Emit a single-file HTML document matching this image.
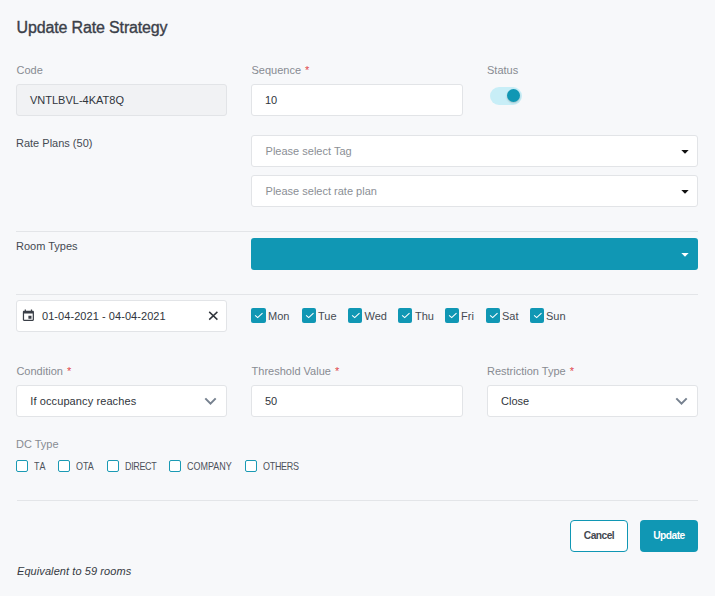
<!DOCTYPE html>
<html>
<head>
<meta charset="utf-8">
<style>
*{box-sizing:border-box;margin:0;padding:0}
html,body{width:715px;height:596px;overflow:hidden;background:#f7f8fa;font-family:"Liberation Sans",sans-serif;}
.a{position:absolute;white-space:nowrap}
.title{left:16.6px;top:20px;font-size:16px;line-height:16px;letter-spacing:-0.15px;-webkit-text-stroke:0.35px #3b4049;color:#3b4049}
.t{font-size:11px;line-height:11px}
.lbl{color:#878b92}
.lbl2{color:#454a52}
.req{color:#e0474c;margin-left:1px}
.box{background:#fff;border:1px solid #e2e4e7;border-radius:3px;height:32px}
.val{color:#30353c}
.ph{color:#8b8f95}
.caret{width:0;height:0;border-left:3.75px solid transparent;border-right:3.75px solid transparent;border-top:3.75px solid #111}
.line{height:1px;background:#e3e5e8}
.cb{width:15px;height:15px;border-radius:2px;background:#1097b4}
.cb svg{position:absolute;left:0;top:0}
.cbo{width:12px;height:12px;border:1.5px solid #1a9ab4;border-radius:2px;background:#fff}
.day{color:#454a52}
.dc{font-size:9px;line-height:9px;color:#4d525a;transform:scaleY(1.15);transform-origin:0 7px}
</style>
</head>
<body>
<div class="a title">Update Rate Strategy</div>

<div class="a t lbl" style="left:16.5px;top:65px">Code</div>
<div class="a t lbl" style="left:251.5px;top:65px">Sequence <span class="req">*</span></div>
<div class="a t lbl" style="left:487px;top:65px">Status</div>

<div class="a box" style="left:16px;top:84px;width:211px;background:#f1f2f4"></div>
<div class="a t val" style="left:30px;top:95px">VNTLBVL-4KAT8Q</div>
<div class="a box" style="left:251px;top:84px;width:212px"></div>
<div class="a t val" style="left:265px;top:95px">10</div>

<!-- toggle -->
<div class="a" style="left:490px;top:87px;width:32px;height:18px;border-radius:9px;background:#c8eef7"></div>
<div class="a" style="left:507px;top:89px;width:13px;height:13px;border-radius:50%;background:#1097b4;box-shadow:0 1px 2px rgba(0,0,0,.2)"></div>

<div class="a t lbl2" style="left:16px;top:138px">Rate Plans (50)</div>
<div class="a box" style="left:251px;top:135px;width:447px"></div>
<div class="a t ph" style="left:265.6px;top:146px">Please select Tag</div>
<svg class="a" style="left:681.1px;top:150px" width="9" height="5"><path d="M0.3 0H7.7L4 3.7Z" fill="#111"/></svg>
<div class="a box" style="left:251px;top:175px;width:447px"></div>
<div class="a t ph" style="left:265.6px;top:186px">Please select rate plan</div>
<svg class="a" style="left:681.1px;top:190px" width="9" height="5"><path d="M0.3 0H7.7L4 3.7Z" fill="#111"/></svg>

<div class="a line" style="left:16px;top:231px;width:682px"></div>
<div class="a t lbl2" style="left:16px;top:241px">Room Types</div>
<div class="a" style="left:251px;top:238px;width:447px;height:32px;border-radius:3px;background:#1097b4"></div>
<svg class="a" style="left:681.1px;top:252.7px" width="9" height="5"><path d="M0.3 0H7.7L4 3.7Z" fill="#fff"/></svg>
<div class="a line" style="left:16px;top:294px;width:682px"></div>

<!-- date -->
<div class="a box" style="left:16px;top:300px;width:211px"></div>
<svg class="a" style="left:20.8px;top:308.8px" width="14.8" height="13.7" viewBox="0 0 24 24" preserveAspectRatio="none"><path fill="#3a3f47" d="M17 12h-5v5h5v-5zM16 1v2H8V1H6v2H5c-1.11 0-1.99.9-1.99 2L3 19c0 1.1.89 2 2 2h14c1.1 0 2-.9 2-2V5c0-1.1-.9-2-2-2h-1V1h-2zm3 18H5V8h14v11z"/></svg>
<div class="a t val" style="left:42px;top:311px;letter-spacing:0.06px">01-04-2021 - 04-04-2021</div>
<svg class="a" style="left:205px;top:308px" width="16" height="15"><path d="M4.2 3.9L12.4 11.6M12.4 3.9L4.2 11.6" fill="none" stroke="#30353c" stroke-width="1.45"/></svg>

<!-- days -->
<div class="a cb" style="left:251px;top:308px"><svg width="15" height="15"><path d="M4.1 7.4l2.6 2.2 4.8-4.5" fill="none" stroke="#fff" stroke-width="1.1"/></svg></div><div class="a t day" style="left:268px;top:311px">Mon</div>
<div class="a cb" style="left:302px;top:308px;width:14px"><svg width="15" height="15"><path d="M4.1 7.4l2.6 2.2 4.8-4.5" fill="none" stroke="#fff" stroke-width="1.1"/></svg></div><div class="a t day" style="left:318px;top:311px">Tue</div>
<div class="a cb" style="left:348px;top:308px;width:14px"><svg width="15" height="15"><path d="M4.1 7.4l2.6 2.2 4.8-4.5" fill="none" stroke="#fff" stroke-width="1.1"/></svg></div><div class="a t day" style="left:364.5px;top:311px">Wed</div>
<div class="a cb" style="left:398px;top:308px;width:14px"><svg width="15" height="15"><path d="M4.1 7.4l2.6 2.2 4.8-4.5" fill="none" stroke="#fff" stroke-width="1.1"/></svg></div><div class="a t day" style="left:415px;top:311px">Thu</div>
<div class="a cb" style="left:445px;top:308px;width:14px"><svg width="15" height="15"><path d="M4.1 7.4l2.6 2.2 4.8-4.5" fill="none" stroke="#fff" stroke-width="1.1"/></svg></div><div class="a t day" style="left:461px;top:311px">Fri</div>
<div class="a cb" style="left:486px;top:308px;width:14px"><svg width="15" height="15"><path d="M4.1 7.4l2.6 2.2 4.8-4.5" fill="none" stroke="#fff" stroke-width="1.1"/></svg></div><div class="a t day" style="left:502px;top:311px">Sat</div>
<div class="a cb" style="left:530px;top:308px;width:14px"><svg width="15" height="15"><path d="M4.1 7.4l2.6 2.2 4.8-4.5" fill="none" stroke="#fff" stroke-width="1.1"/></svg></div><div class="a t day" style="left:546px;top:311px">Sun</div>

<div class="a t lbl" style="left:16.4px;top:366px">Condition <span class="req">*</span></div>
<div class="a t lbl" style="left:251.6px;top:366px">Threshold Value <span class="req">*</span></div>
<div class="a t lbl" style="left:487px;top:366px">Restriction Type <span class="req">*</span></div>

<div class="a box" style="left:16px;top:385px;width:211px"></div>
<div class="a t val" style="left:30.3px;top:396px;letter-spacing:0.1px">If occupancy reaches</div>
<svg class="a" style="left:200px;top:390px" width="22" height="22"><path d="M5.3 8.4l5.2 5.2 5.2-5.2" fill="none" stroke="#76818f" stroke-width="2"/></svg>
<div class="a box" style="left:251px;top:385px;width:212px"></div>
<div class="a t val" style="left:265px;top:396px">50</div>
<div class="a box" style="left:487px;top:385px;width:211px"></div>
<div class="a t val" style="left:501px;top:396px">Close</div>
<svg class="a" style="left:671px;top:390px" width="22" height="22"><path d="M5.3 8.4l5.2 5.2 5.2-5.2" fill="none" stroke="#76818f" stroke-width="2"/></svg>

<div class="a t lbl" style="left:16px;top:439px">DC Type</div>
<div class="a cbo" style="left:16px;top:460px"></div><div class="a dc" style="left:34px;top:463px;letter-spacing:0.6px">TA</div>
<div class="a cbo" style="left:58px;top:460px"></div><div class="a dc" style="left:76px;top:463px">OTA</div>
<div class="a cbo" style="left:107px;top:460px"></div><div class="a dc" style="left:125px;top:463px;letter-spacing:-0.35px">DIRECT</div>
<div class="a cbo" style="left:169px;top:460px"></div><div class="a dc" style="left:187px;top:463px">COMPANY</div>
<div class="a cbo" style="left:245px;top:460px"></div><div class="a dc" style="left:263px;top:463px;letter-spacing:-0.3px">OTHERS</div>

<div class="a line" style="left:17px;top:500px;width:681px"></div>

<div class="a" style="left:570px;top:520px;width:58px;height:32px;border:1px solid #1097b4;border-radius:4px;background:#fff"></div>
<div class="a" style="left:570px;top:531px;width:58px;text-align:center;font-size:10.2px;line-height:10px;letter-spacing:-0.5px;font-weight:bold;color:#434850">Cancel</div>
<div class="a" style="left:640px;top:520px;width:58px;height:32px;border-radius:4px;background:#1097b4"></div>
<div class="a" style="left:640px;top:531px;width:58px;text-align:center;font-size:10.2px;line-height:10px;letter-spacing:-0.5px;font-weight:bold;color:#fff">Update</div>

<div class="a t" style="left:17px;top:566px;font-style:italic;letter-spacing:0.08px;color:#353a42">Equivalent to 59 rooms</div>
</body>
</html>
